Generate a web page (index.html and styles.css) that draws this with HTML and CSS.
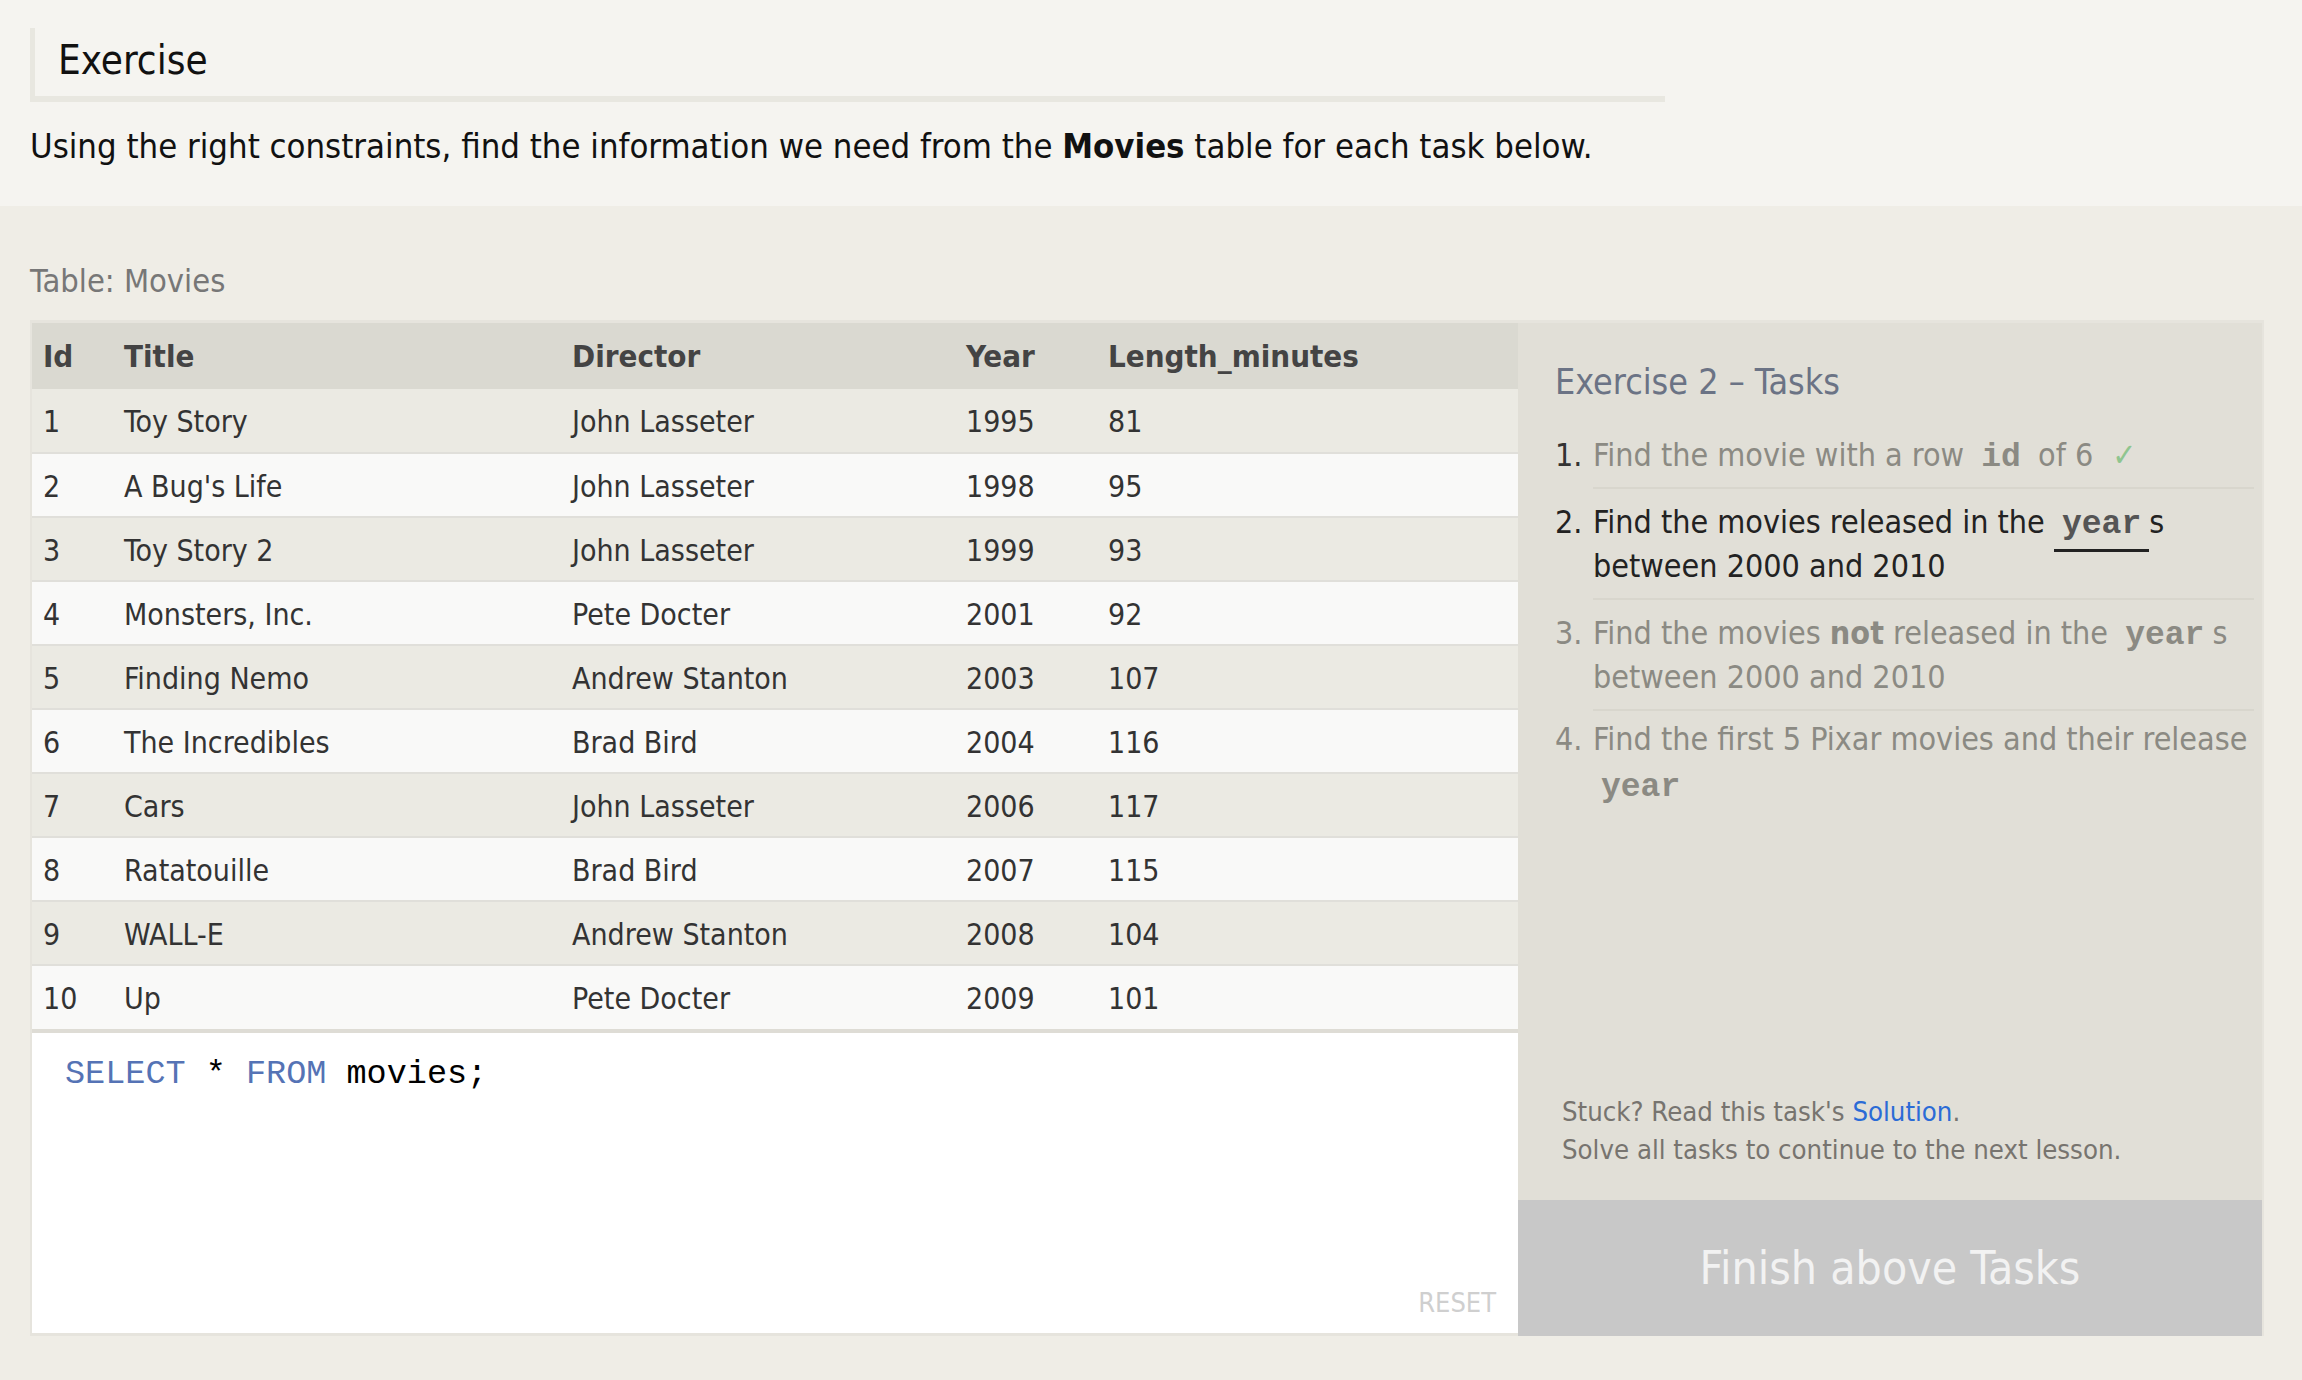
FILE: index.html
```html
<!DOCTYPE html>
<html lang="en">
<head>
<meta charset="utf-8">
<title>Exercise</title>
<link rel="stylesheet" href="styles.css">
</head>
<body>
<header class="top">
  <div class="ex-title"><h2>Exercise</h2></div>
  <p class="intro">Using the right constraints, find the information we need from the <strong>Movies</strong> table for each task below.</p>
</header>
<main class="band">
  <div class="table-label">Table: Movies</div>
  <div class="workspace">
    <div class="left">
      <table class="movies">
        <colgroup>
          <col class="c-id"><col class="c-title"><col class="c-dir"><col class="c-year"><col class="c-len">
        </colgroup>
        <thead>
          <tr><th>Id</th><th>Title</th><th>Director</th><th>Year</th><th>Length_minutes</th></tr>
        </thead>
        <tbody>
          <tr><td>1</td><td>Toy Story</td><td>John Lasseter</td><td>1995</td><td>81</td></tr>
          <tr><td>2</td><td>A Bug's Life</td><td>John Lasseter</td><td>1998</td><td>95</td></tr>
          <tr><td>3</td><td>Toy Story 2</td><td>John Lasseter</td><td>1999</td><td>93</td></tr>
          <tr><td>4</td><td>Monsters, Inc.</td><td>Pete Docter</td><td>2001</td><td>92</td></tr>
          <tr><td>5</td><td>Finding Nemo</td><td>Andrew Stanton</td><td>2003</td><td>107</td></tr>
          <tr><td>6</td><td>The Incredibles</td><td>Brad Bird</td><td>2004</td><td>116</td></tr>
          <tr><td>7</td><td>Cars</td><td>John Lasseter</td><td>2006</td><td>117</td></tr>
          <tr><td>8</td><td>Ratatouille</td><td>Brad Bird</td><td>2007</td><td>115</td></tr>
          <tr><td>9</td><td>WALL-E</td><td>Andrew Stanton</td><td>2008</td><td>104</td></tr>
          <tr><td>10</td><td>Up</td><td>Pete Docter</td><td>2009</td><td>101</td></tr>
        </tbody>
      </table>
      <div class="editor">
        <div class="code"><span class="kw">SELECT</span> * <span class="kw">FROM</span> movies;</div>
        <div class="reset">RESET</div>
      </div>
    </div>
    <aside class="panel">
      <div class="panel-body">
        <h3 class="panel-title">Exercise 2 – Tasks</h3>
        <ol class="tasks">
          <li class="task done"><span class="num">1.</span><span class="txt">Find the movie with a row <code>id</code> of 6 <span class="check">✓</span></span></li>
          <li class="task active"><span class="num">2.</span><span class="txt">Find the movies released in the <code>year</code>s between 2000 and 2010</span></li>
          <li class="task pending"><span class="num">3.</span><span class="txt">Find the movies <strong>not</strong> released in the <code>year</code>s between 2000 and 2010</span></li>
          <li class="task pending last"><span class="num">4.</span><span class="txt">Find the first 5 Pixar movies and their release <code>year</code></span></li>
        </ol>
        <div class="help">
          <p>Stuck? Read this task's <a href="#">Solution</a>.</p>
          <p>Solve all tasks to continue to the next lesson.</p>
        </div>
      </div>
      <div class="finish">Finish above Tasks</div>
    </aside>
  </div>
</main>
</body>
</html>
```

FILE: styles.css
```css
* { box-sizing: border-box; }
html, body { margin: 0; padding: 0; }
body {
  background: #efede6;
  font-family: "DejaVu Sans Condensed", "DejaVu Sans", sans-serif;
  color: #222;
  width: 2302px;
  height: 1380px;
  overflow: hidden;
}

/* top area */
.top {
  background: #f5f4f0;
  height: 206px;
  padding: 28px 0 0 30px;
}
.ex-title {
  width: 1635px;
  height: 74px;
  border-left: 5px solid #e8e7e0;
  border-bottom: 6px solid #e8e7e0;
  padding: 0 0 4px 23px;
}
.ex-title h2 {
  margin: 0;
  font-weight: normal;
  font-size: 40px;
  line-height: 64px;
  color: #111;
}
.intro {
  margin: 24px 0 0;
  font-size: 34.4px;
  line-height: 40px;
  color: #111;
}
.intro strong { font-weight: bold; }

/* band */
.band {
  padding: 55px 0 0 30px;
}
.table-label {
  font-size: 32.4px;
  line-height: 40px;
  color: #777;
  margin-bottom: 19px;
}
.workspace {
  display: grid;
  grid-template-columns: 1488px 746px;
  height: 1016px;
}

.left {
  display: flex;
  flex-direction: column;
  border-top: 3px solid #e6e4dd;
  border-left: 2px solid #e6e4dd;
  border-bottom: 3px solid #e6e4dd;
}
.movies {
  width: 100%;
  border-collapse: collapse;
  table-layout: fixed;
  color: #333;
}
.c-id { width: 81px; }
.c-title { width: 448px; }
.c-dir { width: 394px; }
.c-year { width: 142px; }
.movies th, .movies td {
  text-align: left;
  padding: 0 0 0 11px;
  white-space: nowrap;
}
.movies th {
  background: #dad9d1;
  font-size: 31px;
  font-weight: bold;
  color: #444;
  height: 66px;
  vertical-align: middle;
}
.movies td {
  font-size: 30px;
  height: 64px;
  padding-top: 2px;
  border-bottom: 2px solid #e0dfda;
  vertical-align: middle;
}
.movies tbody tr:nth-child(odd) td { background: #ebeae3; }
.movies tbody tr:nth-child(even) td { background: #f9f9f8; }
.movies tbody tr:last-child td { border-bottom: 0; }

.editor {
  flex: 1;
  background: #fff;
  border-top: 4px solid #dedcd5;
  display: flex;
  flex-direction: column;
  padding: 21px 22px 12px 33px;
}
.code {
  font-family: "Liberation Mono", "Courier New", monospace;
  font-size: 33.5px;
  line-height: 40px;
  color: #000;
}
.kw { color: #5573b5; }
.reset {
  margin-top: auto;
  align-self: flex-end;
  font-size: 27px;
  line-height: 36px;
  color: #cfcfcf;
}

/* panel */
.panel {
  display: flex;
  flex-direction: column;
  background: #e1dfd7;
  border-top: 3px solid #e6e4dd;
  border-right: 2px solid #e6e4dd;
  border-bottom: 0;
}
.panel-body {
  flex: 1;
  display: flex;
  flex-direction: column;
  padding: 37px 8px 31px 37px;
}
.panel-title {
  margin: 0;
  font-weight: normal;
  font-size: 35.6px;
  line-height: 44px;
  color: #6b7385;
}
.tasks {
  list-style: none;
  margin: 29px 0 0;
  padding: 0;
}
.task {
  display: flex;
  font-size: 32px;
  line-height: 44px;
}
.task .num { width: 38px; flex: none; }
.task .txt {
  flex: 1;
  padding: 0 0 10px;
  border-bottom: 2px solid #d8d6cd;
}
.task + .task .txt { padding-top: 11px; }
.task.last .txt { border-bottom: 0; padding-top: 6px; }
.task + .task .num { padding-top: 11px; }
.task.last .num { padding-top: 6px; }
.task code {
  font-family: "Liberation Mono", "Courier New", monospace;
  font-weight: bold;
  font-size: 33px;
  line-height: 33px;
  margin: 0 8px;
}
.done .num { color: #333; }
.done .txt { color: #8b8a83; }
.done code { color: #8b8a83; }
.check { color: #8fc58f; margin-left: 10px; }
.active { color: #222; }
.active code {
  color: #555;
  margin: 0;
  padding: 0 8px 6px;
  border-bottom: 3px solid #222;
}
.pending { color: #8b8a83; }
.pending code { color: #8b8a83; }
.pending strong { font-weight: bold; }
.last code { display: inline-block; line-height: 54px; }

.help {
  margin-top: auto;
  padding-left: 7px;
  font-size: 27.3px;
  line-height: 38px;
  color: #77746f;
}
.help p { margin: 0; }
.help a { color: #2b6bd6; text-decoration: none; }

.finish {
  height: 136px;
  background: #c8c8c8;
  color: #f2f2f2;
  font-size: 46px;
  line-height: 136px;
  text-align: center;
}
```
